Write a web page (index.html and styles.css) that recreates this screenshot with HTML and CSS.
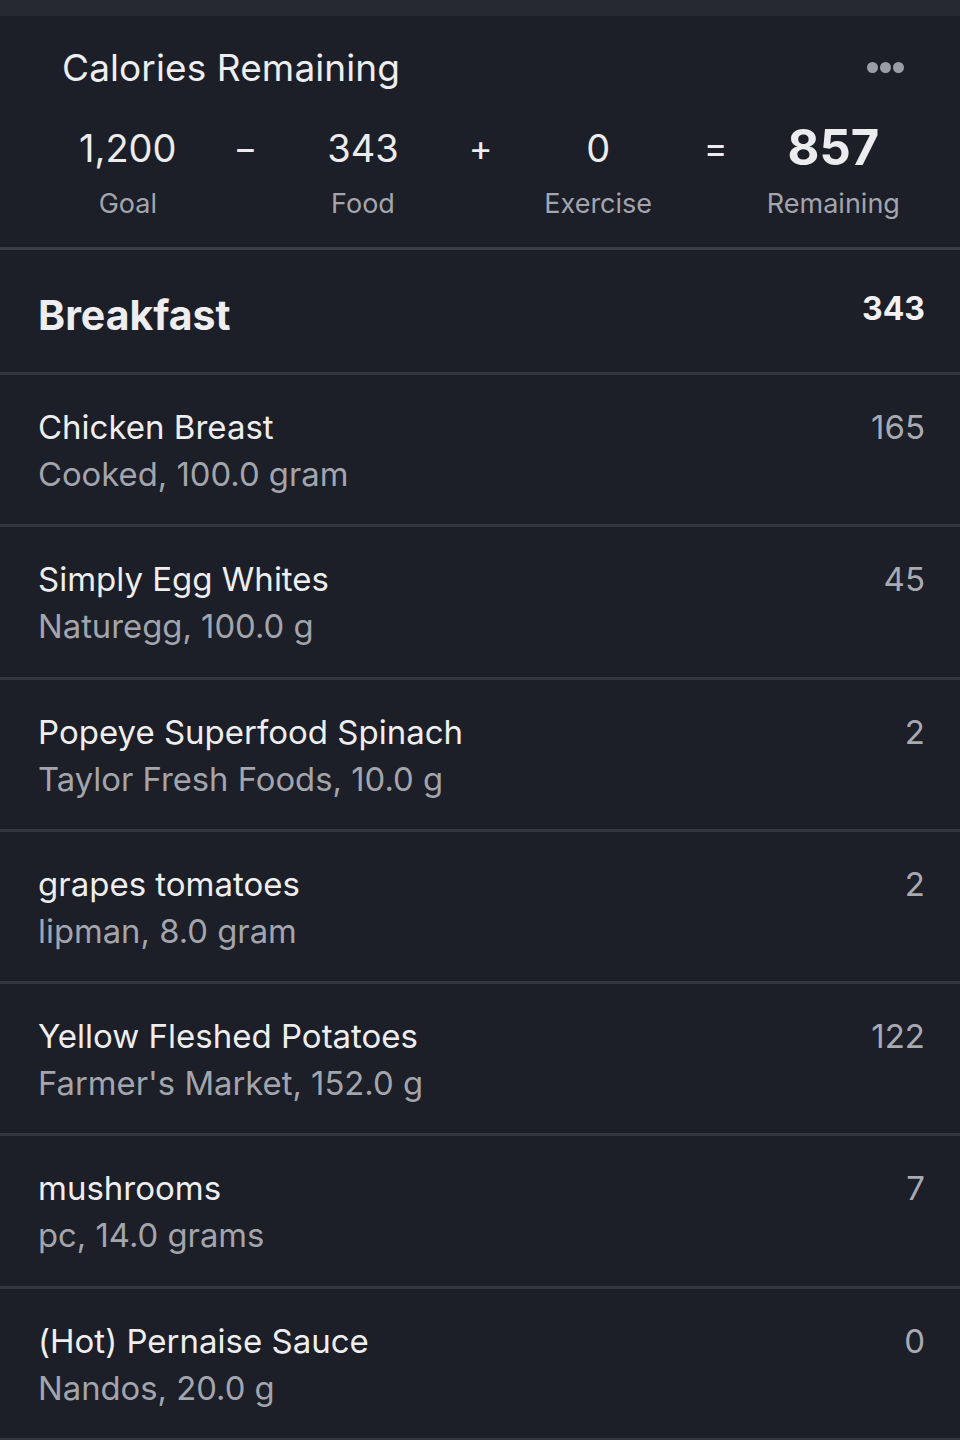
FILE: index.html
```html
<!DOCTYPE html>
<html>
<head>
<meta charset="utf-8">
<link rel="stylesheet" href="styles.css">
</head>
<body>
<div class="topstrip"></div>
<section class="summary">
  <div class="summary-head">
    <h1 class="title">Calories Remaining</h1>
    <div class="dots"><span></span><span></span><span></span></div>
  </div>
  <div class="eq">
    <div class="col"><div class="num">1,200</div><div class="lbl">Goal</div></div>
    <div class="col op">−</div>
    <div class="col"><div class="num">343</div><div class="lbl">Food</div></div>
    <div class="col op">+</div>
    <div class="col"><div class="num">0</div><div class="lbl">Exercise</div></div>
    <div class="col op">=</div>
    <div class="col"><div class="num big">857</div><div class="lbl">Remaining</div></div>
  </div>
</section>
<section class="meal">
  <div class="meal-head">
    <div class="meal-name">Breakfast</div>
    <div class="meal-cal">343</div>
  </div>
  <div class="item"><div class="info"><div class="name">Chicken Breast</div><div class="sub">Cooked, 100.0 gram</div></div><div class="cal">165</div></div>
  <div class="item"><div class="info"><div class="name">Simply Egg Whites</div><div class="sub">Naturegg, 100.0 g</div></div><div class="cal">45</div></div>
  <div class="item"><div class="info"><div class="name">Popeye Superfood Spinach</div><div class="sub">Taylor Fresh Foods, 10.0 g</div></div><div class="cal">2</div></div>
  <div class="item"><div class="info"><div class="name">grapes tomatoes</div><div class="sub">lipman, 8.0 gram</div></div><div class="cal">2</div></div>
  <div class="item"><div class="info"><div class="name">Yellow Fleshed Potatoes</div><div class="sub">Farmer's Market, 152.0 g</div></div><div class="cal">122</div></div>
  <div class="item"><div class="info"><div class="name">mushrooms</div><div class="sub">pc, 14.0 grams</div></div><div class="cal">7</div></div>
  <div class="item"><div class="info"><div class="name">(Hot) Pernaise Sauce</div><div class="sub">Nandos, 20.0 g</div></div><div class="cal">0</div></div>
</section>
</body>
</html>
```
FILE: styles.css
```css
* { box-sizing: border-box; margin: 0; padding: 0; }
html, body { background: #1c1e28; }
body {
  font-family: Inter, "Noto Sans", sans-serif;
  color: #ececee;
  width: 960px;
  height: 1440px;
  overflow: hidden;
}
.topstrip { height: 16px; background: #262832; }
.summary {
  height: 234px;
  border-bottom: 3px solid #3a3c47;
  padding: 30px 0 0 0;
}
.summary-head {
  display: flex;
  justify-content: space-between;
  align-items: center;
  padding: 0 56px 0 62px;
}
.title {
  font-size: 37px;
  font-weight: 400;
  line-height: 44px;
  color: #eeeef0;
  letter-spacing: 0.1px;
}
.dots { display: flex; gap: 2px; padding-bottom: 2px; }
.dots span {
  width: 11px; height: 11px; border-radius: 50%;
  background: #9a9ca6;
}
.eq {
  display: grid;
  grid-template-columns: repeat(7, 117.6px);
  padding-left: 69px;
  margin-top: 33px;
}
.col { display: flex; flex-direction: column; align-items: center; }
.num {
  font-size: 38px;
  line-height: 50px;
  color: #ececee;
  height: 50px;
}
.num.big { font-size: 49px; font-weight: 700; line-height: 50px; }
.lbl {
  font-size: 27px;
  line-height: 34px;
  margin-top: 14px;
  color: #a3a5ad;
}
.op {
  font-size: 36px;
  line-height: 50px;
  color: #ececee;
  justify-content: flex-start;
}
.meal-head {
  display: flex;
  justify-content: space-between;
  align-items: flex-start;
  height: 122px;
  padding: 37px 35px 0 38px;
  border-bottom: 3px solid #33353f;
  margin-top: 3px;
}
.meal-name { font-size: 41px; font-weight: 700; line-height: 50px; color: #eeeef0; }
.meal-cal { font-size: 32px; font-weight: 700; line-height: 36px; color: #f2f2f4; padding-top: 1px; }
.item {
  display: flex;
  justify-content: space-between;
  align-items: flex-start;
  height: 152.3px;
  padding: 32px 35px 0 38px;
  border-bottom: 3px solid #33353f;
}
.name { font-size: 33px; line-height: 40px; color: #eeeef0; }
.sub { font-size: 32.8px; line-height: 40px; margin-top: 7px; color: #a3a5ad; }
.cal { font-size: 33px; line-height: 40px; color: #a8aab2; }
```
